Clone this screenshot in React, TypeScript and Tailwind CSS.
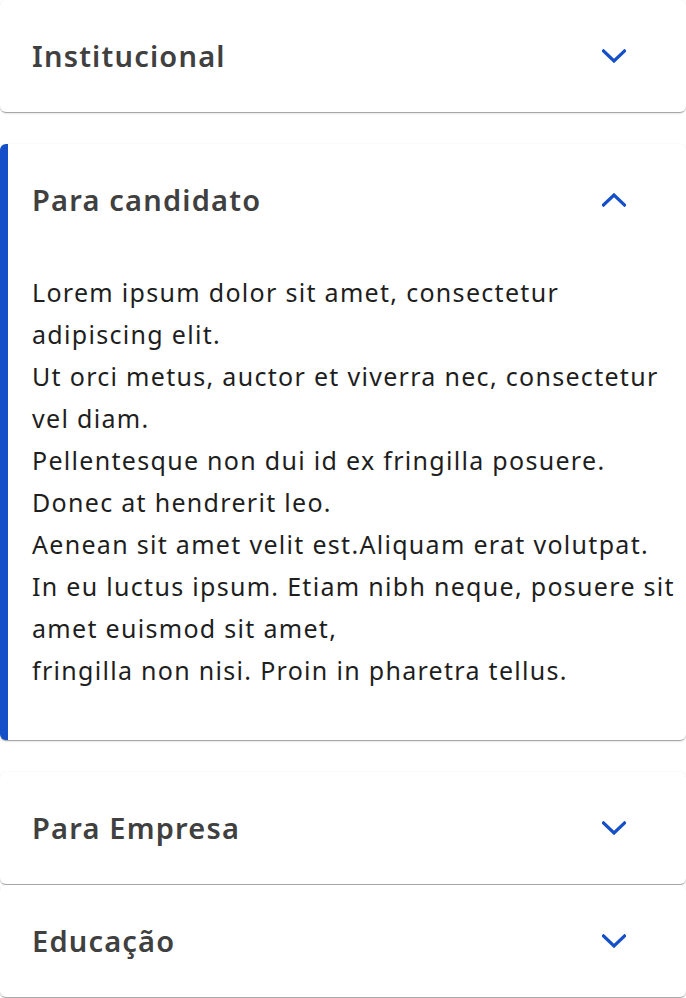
import { useState } from 'react'

const shadow = 'shadow-[0_2px_1px_-1px_rgba(0,0,0,0.2),0_1px_1px_0_rgba(0,0,0,0.14),0_1px_3px_0_rgba(0,0,0,0.12)]'

const bodyLines = [
    'Lorem ipsum dolor sit amet, consectetur',
    'adipiscing elit.',
    'Ut orci metus, auctor et viverra nec, consectetur',
    'vel diam.',
    'Pellentesque non dui id ex fringilla posuere.',
    'Donec at hendrerit leo.',
    'Aenean sit amet velit est.Aliquam erat volutpat.',
    'In eu luctus ipsum. Etiam nibh neque, posuere sit',
    'amet euismod sit amet,',
    'fringilla non nisi. Proin in pharetra tellus.',
]

function Chevron({ up }: { up: boolean }) {
    return (
        <svg width="24" height="14" viewBox="0 0 24 14" fill="none" className="shrink-0">
            <path
                d={up ? 'M1.5 12L12 2L22.5 12' : 'M1.5 2L12 12L22.5 2'}
                stroke="#1550c8"
                strokeWidth="3.2"
                strokeLinecap="square"
            />
        </svg>
    )
}

interface ItemProps {
    title: string
    open: boolean
    onToggle: () => void
    className?: string
}

function Item({ title, open, onToggle, className = '' }: ItemProps) {
    return (
        <div
            className={`bg-white rounded-[6px] overflow-hidden ${shadow} ${
                open ? 'border-l-[8px] border-[#1550c8]' : ''
            } ${className}`}
        >
            <button
                onClick={onToggle}
                className={`w-full h-[112px] flex items-center justify-between pr-[60px] ${
                    open ? 'pl-[24px]' : 'pl-[32px]'
                }`}
            >
                <span className="text-[29px] font-semibold text-[#404040] tracking-[1.2px]">{title}</span>
                <Chevron up={open} />
            </button>
            {open && (
                <div className="pl-[24px] pr-[8px] pt-[15px] pb-[49px] text-[25px] leading-[42px] tracking-[1.3px] text-[#1e1e1e] whitespace-nowrap">
                    {bodyLines.map((l, i) => (
                        <div key={i}>{l}</div>
                    ))}
                </div>
            )}
        </div>
    )
}

export default function App() {
    const [openIdx, setOpenIdx] = useState<number | null>(1)
    const titles = ['Institucional', 'Para candidato', 'Para Empresa', 'Educação']
    const gaps = ['', 'mt-[32px]', 'mt-[32px]', 'mt-[1px]']

    return (
        <div
            className="w-[686px] h-[998px] overflow-hidden bg-white flex flex-col"
            style={{ fontFamily: '"Noto Sans", "Open Sans", sans-serif' }}
        >
            {titles.map((t, i) => (
                <Item
                    key={t}
                    title={t}
                    open={openIdx === i}
                    onToggle={() => setOpenIdx(openIdx === i ? null : i)}
                    className={gaps[i]}
                />
            ))}
        </div>
    )
}
